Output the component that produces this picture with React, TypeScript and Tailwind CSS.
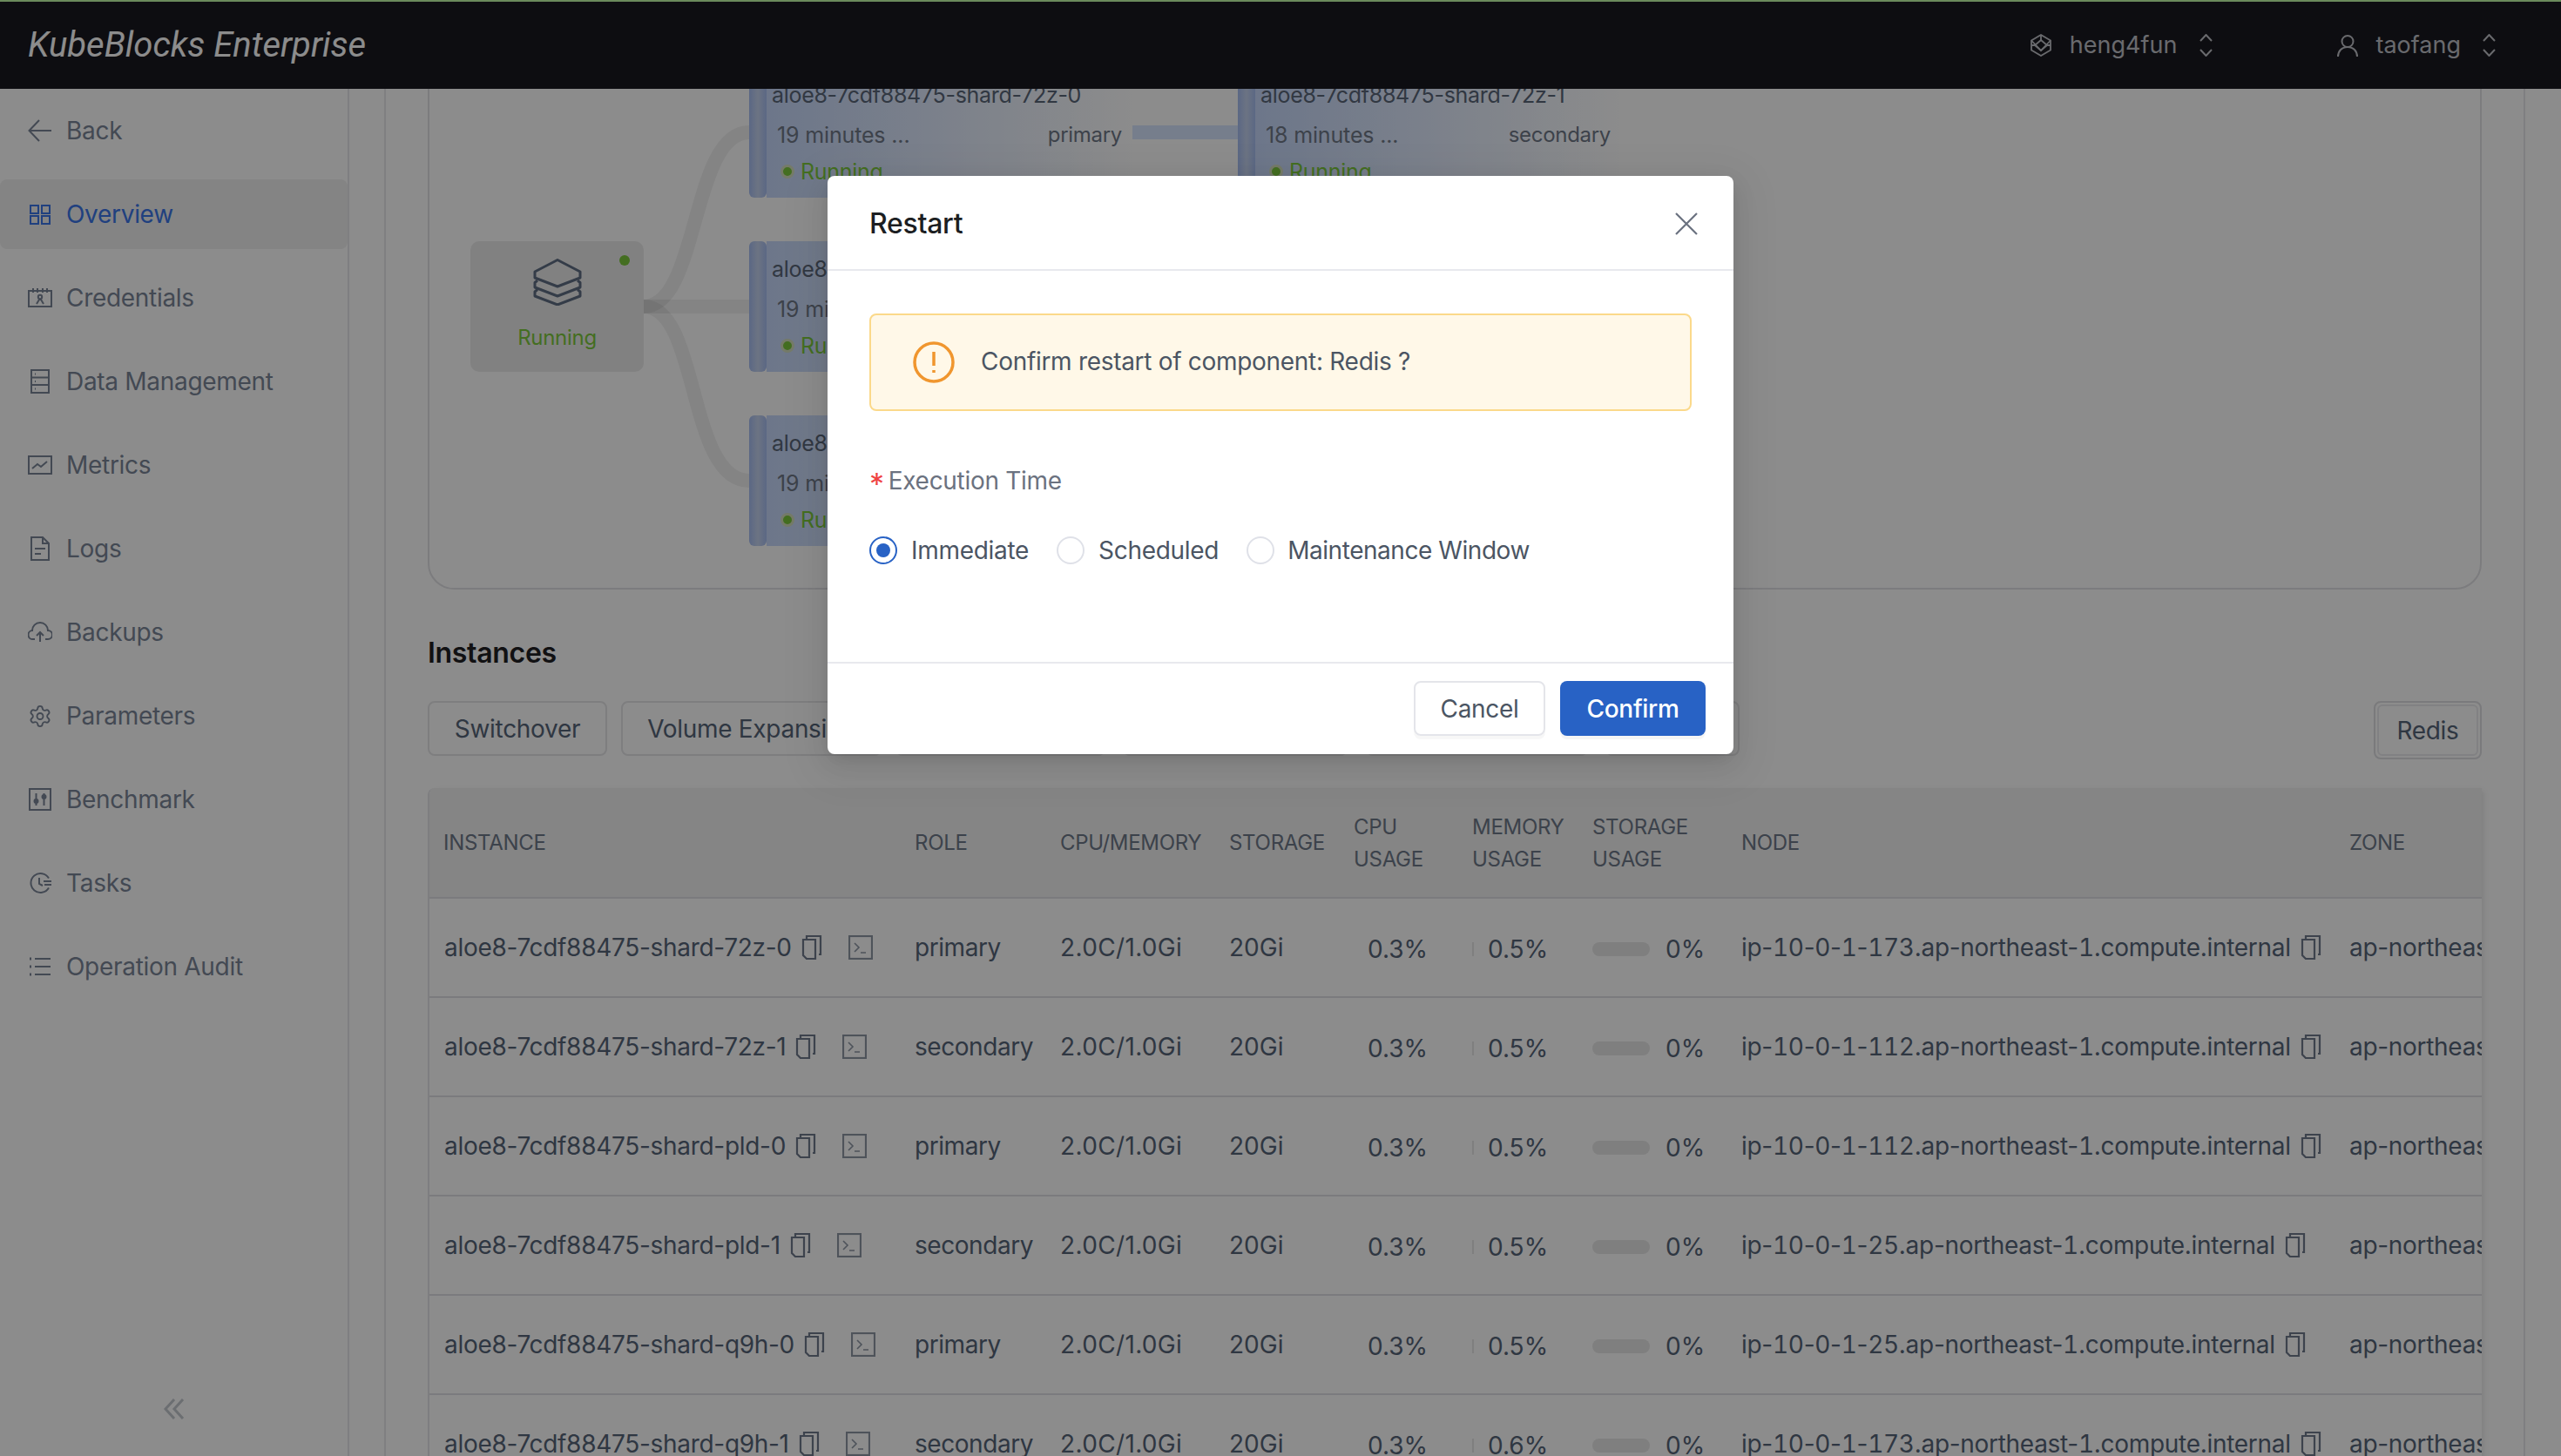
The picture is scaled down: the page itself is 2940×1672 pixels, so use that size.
import React from "react";
import { Settings } from "lucide-react";

const S = ({ children, className, w = 28, h = 28 }: { children: React.ReactNode; className?: string; w?: number; h?: number }) => (
  <svg width={w} height={h} viewBox={`0 0 ${w} ${h}`} fill="none" stroke="currentColor" strokeWidth={2} className={className}>
    {children}
  </svg>
);

const BackIcon = () => (
  <S><path d="M27 14H2M13 2L1.500 14 13 26" /></S>
);
const OverviewIcon = () => (
  <S><rect x="3" y="4" width="9" height="9" /><rect x="16" y="4" width="9" height="9" /><rect x="3" y="16" width="9" height="9" /><rect x="16" y="16" width="9" height="9" /></S>
);
const CredIcon = () => (
  <S><rect x="1" y="6" width="26" height="18" /><path d="M6 3v5M11 3v5M17 3v5M22 3v5" /><circle cx="14" cy="13" r="2.2" /><path d="M10 21l3-5h2l3 5" /></S>
);
const DataIcon = () => (
  <S><rect x="4" y="1" width="20" height="26" /><path d="M4 9.5h20M4 18h20" /><path d="M8 5.500h1M8 14h1M8 22.500h1" /></S>
);
const MetricsIcon = () => (
  <S><rect x="1" y="4" width="26" height="20" /><path d="M5 18l6-5 4 3 7-6" /></S>
);
const LogsIcon = () => (
  <S><path d="M4 1h13l7 7v19H4z" /><path d="M17 1v7h7M8 14h12M8 20h7" /></S>
);
const CloudIcon = () => (
  <S><path d="M8 22H6a5 5 0 0 1-1-10 9 9 0 0 1 18 0 5 5 0 0 1 0 10h-3" /><path d="M14 25V14M10 18l4-4 4 4" /></S>
);
const BenchIcon = () => (
  <S><rect x="2" y="2" width="24" height="24" /><path d="M9.500 7v14M18.500 7v14" /><circle cx="9.500" cy="16" r="2" fill="currentColor" /><circle cx="18.500" cy="11" r="2" fill="currentColor" /></S>
);
const TasksIcon = () => (
  <S><path d="M24 8.500A11 11 0 1 0 24 19.500" /><path d="M13 8v7l4 2M18 12h9M19 16h8" /></S>
);
const ListIcon = () => (
  <S><path d="M8 5h18M8 14h18M8 23h18" /><path d="M2 5h2M2 14h2M2 23h2" strokeWidth={3} /></S>
);

const HexIcon = () => (
  <svg width="26" height="26" viewBox="0 0 26 26" fill="none" stroke="currentColor" strokeWidth={1.8}>
    <path d="M13 1l11 6.500v11L13 25 2 18.500v-11z" />
    <path d="M13 7l7 6-7 6-7-6z" />
    <path d="M2 7.500L13 19l11-11.500M13 1v6M6 13H2M20 13h4" />
  </svg>
);
const UserIcon = () => (
  <svg width="24" height="25" viewBox="0 0 24 25" fill="none" stroke="currentColor" strokeWidth={2}>
    <circle cx="12" cy="7.500" r="6.500" />
    <path d="M1 25c0-6 4-11 11-11s11 5 11 11" />
  </svg>
);
const UpDown = () => (
  <svg width="15" height="26" viewBox="0 0 15 26" fill="none" stroke="currentColor" strokeWidth={2}>
    <path d="M1 8l6.500-7L14 8M1 18l6.500 7L14 18" />
  </svg>
);
const CopyIcon = () => (
  <svg width="24" height="28" viewBox="0 0 24 28" fill="none" stroke="currentColor" strokeWidth={2.200} className="shrink-0">
    <path d="M6 4V1h16v21h-2" />
    <path d="M2 5h14v22H6l-4-4z" />
  </svg>
);
const TermIcon = () => (
  <svg width="28" height="28" viewBox="0 0 28 28" fill="none" stroke="currentColor" strokeWidth={2.200} className="shrink-0">
    <rect x="1" y="1" width="26" height="26" />
    <path d="M7 9l5 5-5 5M14 20h6" strokeWidth={1.6} />
  </svg>
);
const StackIcon = () => (
  <svg width="56" height="54" viewBox="0 0 56 54" fill="none" stroke="currentColor" strokeWidth={3} strokeLinejoin="round">
    <path d="M28 1.500L54 15v7L28 32 2 22v-7z" />
    <path d="M5 25l-3 2.500V33l26 10 26-10v-5.500L51 25" />
    <path d="M5 35.500L2 38v5l26 10 26-10v-5l-3-2.500" />
  </svg>
);

/* digits set with tabular figures only, punctuation stays proportional */
const Digits = ({ text }: { text: string }) => (
  <>
    {text.split(/(\d+)/).map((part, i) =>
      i % 2 === 1 ? <span key={i} className="tabular-nums">{part}</span> : part
    )}
  </>
);

const nav: [string, React.ReactNode, boolean?][] = [
  ["Back", <BackIcon />],
  ["Overview", <OverviewIcon />, true],
  ["Credentials", <CredIcon />],
  ["Data Management", <DataIcon />],
  ["Metrics", <MetricsIcon />],
  ["Logs", <LogsIcon />],
  ["Backups", <CloudIcon />],
  ["Parameters", <Settings size={31} strokeWidth={1.6} />],
  ["Benchmark", <BenchIcon />],
  ["Tasks", <TasksIcon />],
  ["Operation Audit", <ListIcon />],
];

const rows = [
  ["aloe8-7cdf88475-shard-72z-0", "primary", "ip-10-0-1-173.ap-northeast-1.compute.internal", "0.5%"],
  ["aloe8-7cdf88475-shard-72z-1", "secondary", "ip-10-0-1-112.ap-northeast-1.compute.internal", "0.5%"],
  ["aloe8-7cdf88475-shard-pld-0", "primary", "ip-10-0-1-112.ap-northeast-1.compute.internal", "0.5%"],
  ["aloe8-7cdf88475-shard-pld-1", "secondary", "ip-10-0-1-25.ap-northeast-1.compute.internal", "0.5%"],
  ["aloe8-7cdf88475-shard-q9h-0", "primary", "ip-10-0-1-25.ap-northeast-1.compute.internal", "0.5%"],
  ["aloe8-7cdf88475-shard-q9h-1", "secondary", "ip-10-0-1-173.ap-northeast-1.compute.internal", "0.6%"],
];

const gridCols = "grid grid-cols-[540px_167px_194px_143px_136px_138px_171px_698px_400px] w-[2587px]";

const InstanceNode = ({ name, time, role, className }: { name: string; time: string; role: string; className: string }) => (
  <div className={`absolute flex h-[150px] w-[440px] ${className}`}>
    <div className="w-[20px] shrink-0 rounded-[6px] bg-gradient-to-r from-[#a6bdf0] via-[#c5d3ef] to-[#a6bdf0]" />
    <div className="flex flex-1 flex-col bg-gradient-to-r from-[#c6d8fb] to-[#ffffff] pl-[6px] pr-[12px] text-[25px] leading-[36px] text-[#5a6880]">
      <div className="mt-[14px] truncate text-[#5a6678]">{name}</div>
      <div className="mt-[10px] flex items-center justify-between pl-[6px] text-[#6f7888]">
        <span className="tracking-[-0.15px]">{time}</span>
        <span className="text-[24px]">{role}</span>
      </div>
      <div className="mt-[6px] flex items-center gap-[7px] pl-[10px] text-[#7cc83c]">
        <span className="h-[16px] w-[16px] rounded-full border-[3px] border-[#d5e0c0] bg-[#7cc83c]" />
        Running
      </div>
    </div>
  </div>
);

export default function App() {
  return (
    <div className="relative flex h-[1672px] w-[2940px] flex-col overflow-hidden bg-white font-[family-name:Inter,sans-serif] tracking-[-0.3px] text-[#566478]">
      {/* top bar */}
      <header className="flex h-[102px] shrink-0 items-center justify-between border-t-[2px] border-[#c1fba8] bg-[#19191f] pl-[32px] text-[#c0c2c8]">
        <div className="font-[family-name:Roboto,sans-serif] text-[40px] italic tracking-normal text-white">KubeBlocks Enterprise</div>
        <div className="flex items-center text-[27px] tracking-normal">
          <div className="flex items-center">
            <HexIcon />
            <span className="ml-[20px]">heng4fun</span>
            <span className="ml-[26px]"><UpDown /></span>
          </div>
          <div className="ml-[143px] mr-[75px] flex items-center">
            <UserIcon />
            <span className="ml-[20px]">taofang</span>
            <span className="ml-[25px]"><UpDown /></span>
          </div>
        </div>
      </header>

      <div className="flex min-h-0 flex-1">
        {/* sidebar */}
        <aside className="flex w-[401px] shrink-0 flex-col border-r-[2px] border-[#e8e8ec] pt-[8px]">
          <nav className="flex flex-col gap-[16px]">
            {nav.map(([label, icon, active]) => (
              <div
                key={label}
                className={`flex h-[80px] items-center gap-[16px] rounded-[8px] pl-[32px] text-[28px] ${active ? "bg-[#f0f0f0] text-[#3b76e8]" : "text-[#7b8698]"}`}
              >
                <span className="flex h-[28px] w-[28px] items-center justify-center">{icon}</span>
                {label}
              </div>
            ))}
          </nav>
          <div className="mt-auto flex justify-center pb-[42px] text-[#c4c8ce]">
            <svg width="24" height="24" viewBox="0 0 24 24" fill="none" stroke="currentColor" strokeWidth={3}>
              <path d="M12 1L2 12l10 11M22 1L12 12l10 11" />
            </svg>
          </div>
        </aside>

        {/* main scrolled panel */}
        <main className="min-w-0 flex-1 overflow-hidden pl-[40px] pr-[41px]">
          <div className="h-full overflow-hidden border-x-[2px] border-[#e8e8ec] px-[48px]">
            {/* topology card */}
            <div className="relative -mt-[125px] h-[700px] rounded-[30px] border-[2px] border-[#e2e2e6]">
              <svg className="absolute inset-0" width="2354" height="696" fill="none" stroke="rgba(0,0,0,0.06)" strokeWidth={16}>
                <path d="M246 373C310 373 300 173 367 173" />
                <path d="M246 373H367" />
                <path d="M246 373C310 373 296 573 367 573" />
                <path d="M807 173H928" stroke="#d8e6ff" />
              </svg>
              <div className="absolute left-[47px] top-[298px] flex h-[150px] w-[199px] flex-col items-center rounded-[10px] bg-[#ececec] pt-[20px] text-[#5f6d83]">
                <span className="absolute right-[16px] top-[16px] h-[12px] w-[12px] rounded-full bg-[#7cc83c]" />
                <StackIcon />
                <span className="mt-[19px] text-[24px] leading-[36px] text-[#7cc83c]">Running</span>
              </div>
              <InstanceNode className="left-[367px] top-[98px]" name="aloe8-7cdf88475-shard-72z-0" time="19 minutes ..." role="primary" />
              <InstanceNode className="left-[928px] top-[98px]" name="aloe8-7cdf88475-shard-72z-1" time="18 minutes ..." role="secondary" />
              <InstanceNode className="left-[367px] top-[298px]" name="aloe8-7cdf88475-shard-pld-0" time="19 minutes ..." role="primary" />
              <InstanceNode className="left-[367px] top-[498px]" name="aloe8-7cdf88475-shard-pld-1" time="19 minutes ..." role="secondary" />
            </div>

            <h2 className="mt-[52px] text-[32px] font-semibold leading-[42px] text-[#1f2024]">Instances</h2>

            <div className="mt-[34px] flex items-start justify-between">
              <div className="flex text-[28px] text-[#566478]">
                <div className="flex h-[63px] w-[206px] items-center justify-center rounded-[8px] border-[2px] border-[#e5e5e8]">Switchover</div>
                <div className="ml-[16px] flex h-[63px] w-[299px] items-center justify-center rounded-[8px] border-[2px] border-[#e5e5e8]">Volume Expansion</div>
                <div className="ml-[16px] h-[63px] w-[241px] rounded-[8px] border-[2px] border-[#e5e5e8]" />
                <div className="ml-[20px] h-[63px] w-[258px] rounded-[8px] border-[2px] border-[#e5e5e8]" />
                <div className="ml-[21px] h-[63px] w-[255px] rounded-[8px] border-[2px] border-[#e5e5e8]" />
                <div className="ml-[20px] h-[63px] w-[154px] rounded-[8px] border-[2px] border-[#e5e5e8]" />
              </div>
              <div className="h-[67px] w-[124px] rounded-[8px] border-[2px] border-[#dedee2] p-[2px]">
                <div className="flex h-full items-center justify-center rounded-[6px] border-[2px] border-[#ebebee] text-[28px] text-[#566478]">Redis</div>
              </div>
            </div>

            {/* table */}
            <div className="mt-[33px] overflow-hidden rounded-tl-[8px] border-l-[2px] border-[#e5e5ea] shadow-[5px_0_6px_-3px_rgba(0,0,0,0.10)]">
              <div className={`${gridCols} h-[127px] items-center border-b-[2px] border-[#e0e0e6] bg-[#f2f2f2] text-[24px] leading-[37px] text-[#6e7889]`}>
                {["INSTANCE", "ROLE", "CPU/MEMORY", "STORAGE", "CPU USAGE", "MEMORY USAGE", "STORAGE USAGE", "NODE", "ZONE"].map((h, i) => (
                  <div key={h} className={`${i === 0 ? "pl-[16px]" : "pl-[17px]"} ${i >= 4 && i <= 6 ? "w-[130px]" : ""}`}>{h}</div>
                ))}
              </div>
              {rows.map(([name, role, node, mem]) => (
                <div key={name} className={`${gridCols} h-[114px] items-center border-b-[2px] border-[#e0e0e6] text-[28px] text-[#566478]`}>
                  <div className="flex items-center pl-[17px]">
                    <span>{name}</span>
                    <span className="ml-[11px] text-[#6f7a8c]"><CopyIcon /></span>
                    <span className="ml-[30px] text-[#8e97a5]"><TermIcon /></span>
                  </div>
                  <div className="pl-[17px] tracking-[-0.45px]">{role}</div>
                  <div className="pl-[17px] tracking-[0.35px]">2.0C/1.0Gi</div>
                  <div className="pl-[17px] tracking-normal">20Gi</div>
                  <div className="mt-[4px] pl-[33px] tracking-normal">0.3%</div>
                  <div className="mt-[4px] flex items-center pl-[17px] tracking-normal">
                    <span className="h-[16px] w-[2px] bg-[#e8e8e8]" />
                    <span className="ml-[16px]">{mem}</span>
                  </div>
                  <div className="mt-[4px] flex items-center pl-[17px] tracking-normal">
                    <span className="h-[16px] w-[66px] rounded-full bg-[#e8e8e8]" />
                    <span className="ml-[18px]">0%</span>
                  </div>
                  <div className="flex items-center pl-[17px]">
                    <span className="whitespace-nowrap"><Digits text={node} /></span>
                    <span className="ml-[11px] text-[#6f7a8c]"><CopyIcon /></span>
                  </div>
                  <div className="whitespace-nowrap pl-[17px]">ap-northeast-1a</div>
                </div>
              ))}
            </div>
          </div>
        </main>
      </div>

      {/* dim overlay */}
      <div className="absolute inset-0 z-10 bg-black/45" />

      {/* modal */}
      <div className="absolute left-[950px] top-[202px] z-20 flex h-[664px] w-[1040px] flex-col rounded-[8px] bg-white shadow-[0_12px_48px_16px_rgba(0,0,0,0.05),0_9px_28px_0_rgba(0,0,0,0.08),0_6px_16px_-8px_rgba(0,0,0,0.12)]">
        <div className="flex h-[109px] shrink-0 items-center justify-between border-b-[2px] border-[#e8e9ee] pl-[48px] pr-[40px] pt-[2px]">
          <span className="text-[32px] font-medium text-[#1c1e22]">Restart</span>
          <svg width="28" height="28" viewBox="0 0 28 28" fill="none" stroke="#6b7280" strokeWidth={2.200}>
            <path d="M2 2l24 24M26 2L2 26" />
          </svg>
        </div>
        <div className="flex-1 px-[48px] pt-[49px]">
          <div className="flex h-[112px] items-center rounded-[8px] border-[2px] border-[#fbd98a] bg-[#fff8e8] pl-[48px] text-[28px] text-[#4b5563]">
            <svg width="48" height="48" viewBox="0 0 48 48" fill="none" stroke="#f0962e" strokeWidth={3.500}>
              <circle cx="24" cy="24" r="22" />
              <path d="M24 12v16M24 33v3" />
            </svg>
            <span className="mb-[2px] ml-[30px]">Confirm restart of component: Redis ?</span>
          </div>
          <div className="mt-[59px] flex items-center text-[28px] leading-[40px] text-[#6b7280]">
            <span className="mr-[5px] mt-[8px] text-[34px] leading-none text-[#ef4444]">*</span>Execution Time
          </div>
          <div className="mt-[39px] flex items-center text-[28px] leading-[40px] text-[#4b5563]">
            <span className="flex h-[32px] w-[32px] items-center justify-center rounded-full border-[2px] border-[#2862c5]">
              <span className="h-[16px] w-[16px] rounded-full bg-[#2862c5]" />
            </span>
            <span className="ml-[16px]">Immediate</span>
            <span className="ml-[32px] h-[32px] w-[32px] rounded-full border-[2px] border-[#dfe1e8]" />
            <span className="ml-[16px]">Scheduled</span>
            <span className="ml-[32px] h-[32px] w-[32px] rounded-full border-[2px] border-[#dfe1e8]" />
            <span className="ml-[15px] tracking-[-0.45px]">Maintenance Window</span>
          </div>
        </div>
        <div className="flex h-[106px] shrink-0 items-start justify-end gap-[17px] border-t-[2px] border-[#e8e9ee] pr-[32px] pt-[20px] text-[28px]">
          <div className="flex h-[63px] w-[151px] items-center justify-center rounded-[8px] border-[2px] border-[#e4e5ea] text-[#4b5563] shadow-[0_4px_0_rgba(0,0,0,0.03)]">Cancel</div>
          <div className="flex h-[63px] w-[167px] items-center justify-center rounded-[8px] bg-[#2862c5] font-medium text-white shadow-[0_4px_0_rgba(0,0,0,0.04)]">Confirm</div>
        </div>
      </div>
    </div>
  );
}
